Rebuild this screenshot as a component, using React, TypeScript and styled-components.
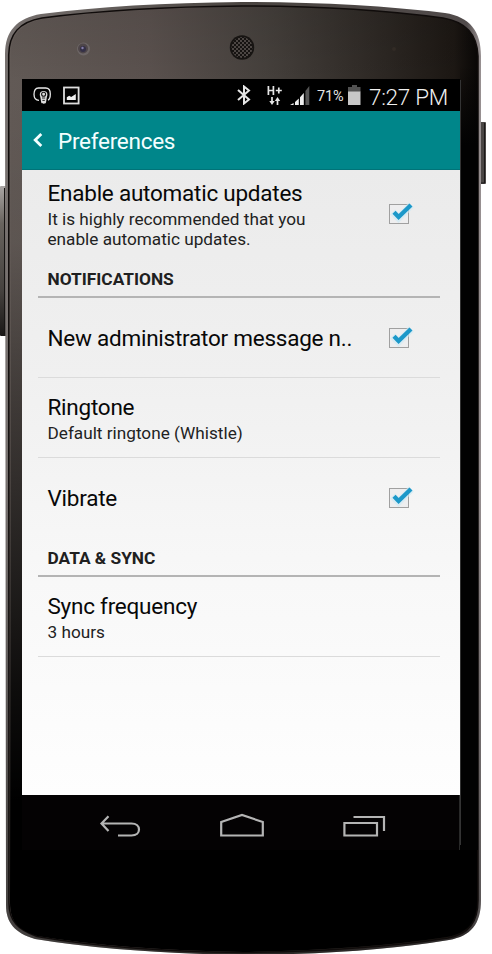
import React from "react";
import styled, { createGlobalStyle } from "styled-components";

const GlobalStyle = createGlobalStyle`
  * { box-sizing: border-box; }
  body { margin: 0; background: #fff; font-family: Roboto, "Liberation Sans", sans-serif; overflow: hidden; }
`;

const Phone = styled.main`
  display: grid;
  width: 492px;
  height: 954px;
  overflow: hidden;
`;
const Body = styled.svg`
  grid-area: 1 / 1;
  display: block;
`;
const Screen = styled.div`
  grid-area: 1 / 1;
  z-index: 1;
  width: 438px;
  margin: 79px 0 0 22px;
  display: flex;
  flex-direction: column;
`;
const StatusBar = styled.div`
  height: 32px;
  flex: none;
  background: #000;
  color: #e4e4e4;
  display: flex;
  align-items: center;
  justify-content: space-between;
  padding: 0 12px 0 11px;
`;
const StatusGroup = styled.div`
  display: flex;
  align-items: center;
`;
const Icon = styled.svg<{ $gap?: number }>`
  display: block;
  flex: none;
  margin-right: ${(p) => p.$gap ?? 0}px;
`;
const Percent = styled.span`
  width: 31px;
  font-size: 14.5px;
  line-height: 32px;
  white-space: nowrap;
  letter-spacing: -0.2px;
  padding-top: 3px;
`;
const Clock = styled.span`
  width: 79px;
  font-size: 22.5px;
  font-weight: 300;
  line-height: 32px;
  padding-top: 3px;
  white-space: nowrap;
  letter-spacing: -0.3px;
  color: #f0f0f0;
`;
const AppBar = styled.header`
  height: 59px;
  flex: none;
  background: #00868a;
  border-bottom: 1px solid #007378;
  display: flex;
  align-items: center;
  padding-left: 11px;
`;
const AppTitle = styled.h1`
  margin: 2px 0 0;
  font-size: 22.5px;
  font-weight: 400;
  line-height: 30px;
  letter-spacing: -0.27px;
  color: #f4ffff;
`;
const Content = styled.section`
  height: 625px;
  flex: none;
  padding: 0 20px 0 16px;
  background: linear-gradient(#ebebeb, #f0f0f0 33%, #f8f8f8 66%, #fefefe);
`;
const Row = styled.div<{ $h: number; $line?: boolean }>`
  height: ${(p) => p.$h}px;
  display: flex;
  align-items: center;
  justify-content: space-between;
  padding: 0 26px 0 9.5px;
  border-bottom: ${(p) => (p.$line ? "1px solid #dbdbdb" : "none")};
`;
const Texts = styled.div`
  display: flex;
  flex-direction: column;
`;
const Title = styled.div`
  font-size: 22.5px;
  line-height: 28px;
  color: #080808;
  white-space: nowrap;
  letter-spacing: -0.24px;
`;
const Summary = styled.div`
  font-size: 17.2px;
  line-height: 20px;
  padding-top: 2px;
  color: #222;
  white-space: nowrap;
`;
const SectionTitle = styled.h2<{ $h: number }>`
  margin: 0;
  height: ${(p) => p.$h}px;
  display: flex;
  align-items: flex-end;
  padding: 0 9.5px 7px;
  border-bottom: 2px solid #b4b4b4;
  font-size: 17.3px;
  line-height: 20px;
  font-weight: 700;
  color: #202020;
`;
const NavBar = styled.nav`
  height: 55px;
  flex: none;
  display: flex;
  justify-content: space-between;
  padding: 18px 73px 0 77px;
  background: #040203;
  border-right: 1px solid #292929;
`;

const OUTER =
  "M5 54C5 31 17 18 41 14Q125 3 242 2Q355 2 445 13C470 17 481 31 481 56V900C481 924 471 936 449 940Q365 954 243 955Q120 953 35 939C15 933 6 923 6 905Z";

const PhoneBody = () => (
  <Body width="492" height="954" viewBox="0 0 492 954">
    <defs>
      <linearGradient id="face" x1="0" x2="1" y1="0" y2="0">
        <stop offset="0" stopColor="#625a56" />
        <stop offset=".3" stopColor="#5a514e" />
        <stop offset=".55" stopColor="#45403c" />
        <stop offset=".8" stopColor="#2c2723" />
        <stop offset=".95" stopColor="#1c1713" />
        <stop offset="1" stopColor="#080605" />
      </linearGradient>
      <linearGradient id="shade" x1="0" x2="0" y1="0" y2="1">
        <stop offset="0" stopColor="#000" stopOpacity=".08" />
        <stop offset=".08" stopColor="#000" stopOpacity="0" />
        <stop offset=".25" stopColor="#000" stopOpacity=".05" />
        <stop offset=".42" stopColor="#000" stopOpacity=".36" />
        <stop offset=".72" stopColor="#000" stopOpacity=".86" />
        <stop offset=".84" stopColor="#000" />
        <stop offset="1" stopColor="#000" />
      </linearGradient>
      <linearGradient id="right" x1="0" x2="0" y1="0" y2="1">
        <stop offset="0" stopColor="#020202" stopOpacity="0" />
        <stop offset="1" stopColor="#020202" />
      </linearGradient>
      <linearGradient id="rim" x1="0" x2="1" y1="0" y2="0">
        <stop offset="0" stopColor="#77716f" />
        <stop offset=".5" stopColor="#494440" />
        <stop offset=".97" stopColor="#514b4b" />
        <stop offset="1" stopColor="#999293" />
      </linearGradient>
      <linearGradient id="rimShade" x1="0" x2="0" y1="0" y2="1">
        <stop offset=".5" stopColor="#000" stopOpacity="0" />
        <stop offset="1" stopColor="#000" stopOpacity=".45" />
      </linearGradient>
      <linearGradient id="key" x1="0" x2="0" y1="0" y2="1">
        <stop offset="0" stopColor="#aaa6a4" />
        <stop offset=".25" stopColor="#68635e" />
        <stop offset=".7" stopColor="#45413e" />
        <stop offset="1" stopColor="#191716" />
      </linearGradient>
      <pattern id="mesh" width="4" height="4" patternUnits="userSpaceOnUse">
        <rect width="4" height="4" fill="#161311" />
        <rect x=".2" y=".2" width="1.6" height="1.6" fill="#6a625e" />
        <rect x="2.2" y="2.2" width="1.6" height="1.6" fill="#6a625e" />
      </pattern>
    </defs>
    <rect x="0" y="186" width="7" height="150" rx="1" fill="url(#key)" />
    <path d="M4.5 188V334" stroke="#171514" />
    <rect x="479" y="122" width="7" height="62" rx="1" fill="#4a4644" />
    <path d="M484.5 123V183H480" stroke="#1b1918" fill="none" />
    <path d={OUTER} fill="url(#rim)" />
    <path d={OUTER} fill="url(#rimShade)" />
    <path
      d="M8.7 55C9 34 19 22 42 18Q126 7 242 6Q354 6 443 18C466 22 477 34 478 56V900C478 922 469 934 448 938Q363 951 243 952.5Q121 951 37 936.5C18 930 9 921 9 903Z"
      fill="url(#face)"
      stroke="#100c0b"
      strokeWidth="1.5"
    />
    <path
      d="M11 55C11 34 21 24 43 19Q126 8 242 7Q354 7 443 19C466 23 476 34 477 56V900C477 922 468 933 447 937Q363 950 243 952Q121 950 37 936C18 930 10 921 10 903Z"
      fill="url(#shade)"
    />
    <rect x="460" y="65" width="18" height="80" fill="url(#right)" />
    <rect x="460" y="145" width="18" height="705" fill="#020202" />
    <path d="M460.5 80V845" stroke="#343434" />
    <circle cx="83.5" cy="49" r="6.5" fill="#6d6666" />
    <circle cx="83" cy="48.5" r="5" fill="#4e4649" />
    <circle cx="83" cy="49" r="3" fill="#343047" />
    <circle cx="82.5" cy="48" r="1.2" fill="#867fa9" />
    <circle cx="242" cy="47.5" r="12.2" fill="#171412" />
    <circle cx="242" cy="47.5" r="10.5" fill="url(#mesh)" />
    <circle cx="394" cy="49" r="2" fill="#393129" opacity=".6" />
  </Body>
);

const CaptureIcon = () => (
  <Icon $gap={11} width="19" height="19" viewBox="0 0 19 19" fill="none" stroke="#e8e8e8" strokeWidth="1.3">
    <path d="M6 14.3C2.3 14.3 1 12.3 1 8.3C1 4 2.5 2 5.5 2H12.7C16 2 17.3 4 17.3 8C17.3 11.6 16.6 13.6 15 14" />
    <path d="M6.8 8.2C6.8 4 14.4 4 14.4 8.2C14.4 10 13.9 10.4 13.7 12L13 16.6C12.6 18.2 8.6 18.2 8.2 16.6L7.5 12C7.3 10.4 6.8 10 6.8 8.2Z" fill="#ddd" stroke="none" />
    <circle cx="10.6" cy="8.2" r="2" stroke="#161616" strokeWidth="1.1" />
    <path d="M9 12H12.2M9.4 14.4H11.8" stroke="#222" strokeWidth="1" />
  </Icon>
);
const PictureIcon = () => (
  <Icon width="17" height="19" viewBox="0 0 17 19">
    <rect x="1" y="1.5" width="14.6" height="16" fill="none" stroke="#ddd" strokeWidth="1.8" />
    <path d="M3.8 14V11.2L6.2 9.7L8.2 11L12.8 8V14Z" fill="#eee" />
  </Icon>
);
const BluetoothIcon = () => (
  <Icon $gap={16} width="14" height="20" viewBox="0 0 14 20" fill="none" stroke="#e6e6e6" strokeWidth="2">
    <path d="M1 5L12 14.5L7 18.5V1.5L12 5.5L1 15" />
  </Icon>
);
const NetworkIcon = () => (
  <Icon $gap={8} width="15" height="21" viewBox="0 0 15 21" fill="none" stroke="#e6e6e6" strokeWidth="1.7">
    <path d="M1.4 1V10M6.4 1V10M1.4 5.5H6.4M8.8 5.5H14.8M11.8 2.4V8.6" />
    <path d="M5 12V18M10.5 20V14" />
    <path d="M2.3 16H7.7L5 20ZM7.8 16L10.5 12L13.2 16Z" fill="#e6e6e6" stroke="none" />
  </Icon>
);
const SignalIcon = () => (
  <Icon $gap={7} width="20" height="20" viewBox="0 0 20 20">
    <path d="M0 20L3.6 18V20ZM5 17L8.8 13.5V20H5ZM10 12.2L13.8 8V20H10Z" fill="#eee" />
    <path d="M15.4 6L19.3 1V20H15.4Z" fill="#555" />
  </Icon>
);
const BatteryIcon = () => (
  <Icon $gap={8} width="13" height="20" viewBox="0 0 13 20">
    <path d="M4 0H9V2H12.5V7H0V2H4Z" fill="#515151" />
    <path d="M0 6.5H12.5V20H0Z" fill="#c7c7c7" />
  </Icon>
);
const CheckBox = () => (
  <Icon width="28" height="30" viewBox="0 0 28 30">
    <rect x="3.5" y="5.5" width="19" height="19" fill="#eeeeef" stroke="#a0a0a0" />
    <path d="M6.5 13L12.5 19L25.2 6" fill="none" stroke="#cdeaf5" strokeWidth="7" opacity=".65" />
    <path d="M8 13.2L12.6 18L25 6" fill="none" stroke="#1c98c9" strokeWidth="4.3" />
  </Icon>
);

type PreferenceProps = { title: string; summary?: string[]; height: number; line?: boolean; checked?: boolean };
const Preference = ({ title, summary = [], height, line, checked }: PreferenceProps) => (
  <Row $h={height} $line={line}>
    <Texts>
      <Title>{title}</Title>
      {summary.length > 0 && (
        <Summary>
          {summary.map((text) => (
            <div key={text}>{text}</div>
          ))}
        </Summary>
      )}
    </Texts>
    {checked && <CheckBox />}
  </Row>
);

export default function App() {
  return (
    <>
      <GlobalStyle />
      <Phone>
        <PhoneBody />
        <Screen>
          <StatusBar>
            <StatusGroup>
              <CaptureIcon />
              <PictureIcon />
            </StatusGroup>
            <StatusGroup>
              <BluetoothIcon />
              <NetworkIcon />
              <SignalIcon />
              <Percent>71%</Percent>
              <BatteryIcon />
              <Clock>7:27 PM</Clock>
            </StatusGroup>
          </StatusBar>
          <AppBar>
            <Icon $gap={15} width="10" height="16" viewBox="0 0 10 16" fill="none" stroke="#f4ffff" strokeWidth="2.8">
              <path d="M8.3 2L2.2 8L8.3 14" />
            </Icon>
            <AppTitle>Preferences</AppTitle>
          </AppBar>
          <Content>
            <Preference
              title="Enable automatic updates"
              summary={["It is highly recommended that you", "enable automatic updates."]}
              height={87}
              checked
            />
            <SectionTitle $h={41}>NOTIFICATIONS</SectionTitle>
            <Preference title="New administrator message n.." height={80} line checked />
            <Preference title="Ringtone" summary={["Default ringtone (Whistle)"]} height={80} line />
            <Preference title="Vibrate" height={79} checked />
            <SectionTitle $h={40}>DATA &amp; SYNC</SectionTitle>
            <Preference title="Sync frequency" summary={["3 hours"]} height={80} line />
          </Content>
          <NavBar>
            <Icon width="43" height="25" viewBox="0 0 43 25" fill="none" stroke="#b4b4b4" strokeWidth="2.2">
              <path d="M9.5 3.3L2.5 10.5L9.5 18M2.5 10.5H32.5C42.5 10.5 42.5 22.5 32.5 22.5H19" />
            </Icon>
            <Icon width="46" height="25" viewBox="0 0 46 25" fill="none" stroke="#b4b4b4" strokeWidth="2.2">
              <path d="M1.2 22.5V9L22 2L42.8 9V22.5Z" />
            </Icon>
            <Icon width="43" height="25" viewBox="0 0 43 25" fill="none" stroke="#b4b4b4" strokeWidth="2.2">
              <path d="M1.4 10H34V22.5H1.4ZM10.5 4H41V18" />
            </Icon>
          </NavBar>
        </Screen>
      </Phone>
    </>
  );
}
